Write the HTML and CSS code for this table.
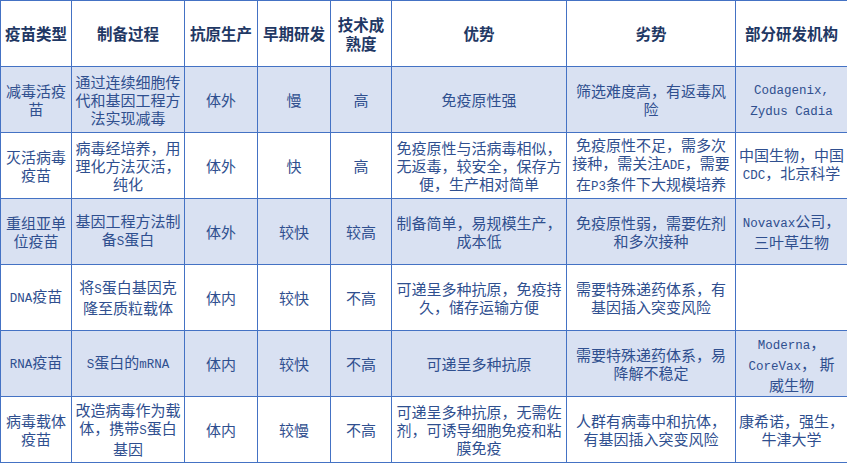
FILE: index.html
```html
<!DOCTYPE html>
<html lang="zh-CN">
<head>
<meta charset="utf-8">
<title>疫苗类型对比</title>
<link rel="stylesheet" href="styles.css">
</head>
<body>
<table class="vt">
  <colgroup>
    <col class="c1"><col class="c2"><col class="c3"><col class="c4"><col class="c5"><col class="c6"><col class="c7"><col class="c8">
  </colgroup>
  <thead>
    <tr>
      <th>疫苗类型</th>
      <th>制备过程</th>
      <th>抗原生产</th>
      <th>早期研发</th>
      <th>技术成<br>熟度</th>
      <th>优势</th>
      <th>劣势</th>
      <th>部分研发机构</th>
    </tr>
  </thead>
  <tbody>
    <tr class="fill">
      <td>减毒活疫<br>苗</td>
      <td>通过连续细胞传<br>代和基因工程方<br>法实现减毒</td>
      <td>体外</td>
      <td>慢</td>
      <td>高</td>
      <td>免疫原性强</td>
      <td>筛选难度高，有返毒风<br>险</td>
      <td><span class="en">Codagenix,</span><br><span class="en">Zydus Cadia</span></td>
    </tr>
    <tr>
      <td>灭活病毒<br>疫苗</td>
      <td>病毒经培养，用<br>理化方法灭活，<br>纯化</td>
      <td>体外</td>
      <td>快</td>
      <td>高</td>
      <td>免疫原性与活病毒相似，<br>无返毒，较安全，保存方<br>便，生产相对简单</td>
      <td>免疫原性不足，需多次<br>接种，需关注<span class="en">ADE</span>，需要<br>在<span class="en">P3</span>条件下大规模培养</td>
      <td>中国生物，中国<br><span class="en">CDC</span>，北京科学</td>
    </tr>
    <tr class="fill">
      <td>重组亚单<br>位疫苗</td>
      <td>基因工程方法制<br>备<span class="en">S</span>蛋白</td>
      <td>体外</td>
      <td>较快</td>
      <td>较高</td>
      <td>制备简单，易规模生产，<br>成本低</td>
      <td>免疫原性弱，需要佐剂<br>和多次接种</td>
      <td><span class="en">Novavax</span>公司，<br>三叶草生物</td>
    </tr>
    <tr>
      <td><span class="en">DNA</span>疫苗</td>
      <td>将<span class="en">S</span>蛋白基因克<br>隆至质粒载体</td>
      <td>体内</td>
      <td>较快</td>
      <td>不高</td>
      <td>可递呈多种抗原，免疫持<br>久，储存运输方便</td>
      <td>需要特殊递药体系，有<br>基因插入突变风险</td>
      <td></td>
    </tr>
    <tr class="fill">
      <td><span class="en">RNA</span>疫苗</td>
      <td><span class="en">S</span>蛋白的<span class="en">mRNA</span></td>
      <td>体内</td>
      <td>较快</td>
      <td>不高</td>
      <td>可递呈多种抗原</td>
      <td>需要特殊递药体系，易<br>降解不稳定</td>
      <td><span class="en">Moderna</span>，<br><span class="en">CoreVax</span>， 斯<br>威生物</td>
    </tr>
    <tr>
      <td>病毒载体<br>疫苗</td>
      <td>改造病毒作为载<br>体，携带<span class="en">S</span>蛋白<br>基因</td>
      <td>体内</td>
      <td>较慢</td>
      <td>不高</td>
      <td>可递呈多种抗原，无需佐<br>剂，可诱导细胞免疫和粘<br>膜免疫</td>
      <td>人群有病毒中和抗体，<br>有基因插入突变风险</td>
      <td>康希诺，强生，<br>牛津大学</td>
    </tr>
  </tbody>
</table>
</body>
</html>
```

FILE: styles.css
```css
html, body {
  margin: 0;
  padding: 0;
  background: #ffffff;
}

.vt {
  border-collapse: collapse;
  table-layout: fixed;
  width: 847px;
  font-family: "Noto Sans CJK SC", "Noto Sans", sans-serif;
}

.c1 { width: 71px; }
.c2 { width: 113px; }
.c3 { width: 73px; }
.c4 { width: 73px; }
.c5 { width: 61px; }
.c6 { width: 175px; }
.c7 { width: 169px; }
.c8 { width: 112px; }

.vt th,
.vt td {
  border: 1px solid #4472c4;
  height: 65px;
  padding: 0 2px;
  text-align: center;
  vertical-align: middle;
  white-space: nowrap;
  overflow: hidden;
}

.vt th {
  font-size: 15.5px;
  line-height: 19px;
  font-weight: 700;
  color: #1f3864;
  background: #ffffff;
}

.vt td {
  font-size: 15px;
  line-height: 18px;
  font-weight: 400;
  color: #2f4f8f;
}

.vt tr.fill td {
  background: #d9e1f2;
}

.en {
  font-family: "Liberation Mono", "DejaVu Sans Mono", monospace;
  font-size: 12.5px;
}
```
